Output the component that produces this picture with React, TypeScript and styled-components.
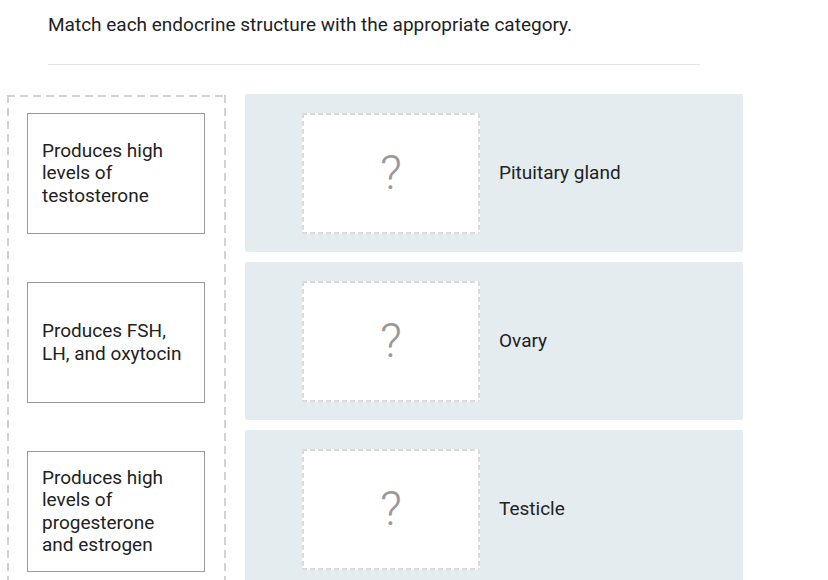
import React from "react";
import styled, { createGlobalStyle, css } from "styled-components";

const GlobalStyle = createGlobalStyle`
  html, body {
    margin: 0;
    padding: 0;
    background: #ffffff;
    font-family: Roboto, "Liberation Sans", Arial, sans-serif;
    color: #222222;
  }
`;

interface Pair {
  item: string;
  category: string;
}

const pairs: Pair[] = [
  { item: "Produces high levels of testosterone", category: "Pituitary gland" },
  { item: "Produces FSH, LH, and oxytocin", category: "Ovary" },
  { item: "Produces high levels of progesterone and estrogen", category: "Testicle" },
];

// dashed outline drawn with gradients, so dash and gap lengths can be set
const dashed = (color: string, dash: number, gap: number, width: number) => css`
  background-image:
    repeating-linear-gradient(90deg, ${color} 0 ${dash}px, transparent ${dash}px ${dash + gap}px),
    repeating-linear-gradient(90deg, ${color} 0 ${dash}px, transparent ${dash}px ${dash + gap}px),
    repeating-linear-gradient(180deg, ${color} 0 ${dash}px, transparent ${dash}px ${dash + gap}px),
    repeating-linear-gradient(180deg, ${color} 0 ${dash}px, transparent ${dash}px ${dash + gap}px);
  background-size: 100% ${width}px, 100% ${width}px, ${width}px 100%, ${width}px 100%;
  background-position: 0 0, 0 100%, 0 0, 100% 0;
  background-repeat: no-repeat;
`;

const App: React.FC = () => {
  return (
    <Page>
      <GlobalStyle />
      <Header>
        <Prompt>Match each endocrine structure with the appropriate category.</Prompt>
        <Divider />
      </Header>
      <Board>
        <Pool>
          {pairs.map((p) => (
            <Card key={p.item}>
              <CardText>{p.item}</CardText>
            </Card>
          ))}
        </Pool>
        <Targets>
          {pairs.map((p) => (
            <TargetRow key={p.category}>
              <DropZone>
                <Placeholder>?</Placeholder>
              </DropZone>
              <Category>{p.category}</Category>
            </TargetRow>
          ))}
        </Targets>
      </Board>
    </Page>
  );
};

export default App;

const Page = styled.div`
  width: 828px;
  height: 580px;
  overflow: hidden;
  box-sizing: border-box;
`;

const Header = styled.div`
  padding: 12px 0 0 48px;
  width: 652px;
`;

const Prompt = styled.h1`
  margin: 0;
  font-size: 19px;
  font-weight: 400;
  line-height: 25px;
  color: #222222;
`;

const Divider = styled.div`
  margin-top: 27px;
  height: 1px;
  background: #e3e3e3;
`;

const Board = styled.div`
  display: flex;
  align-items: flex-start;
  gap: 19px;
  margin-top: 29px;
  padding-left: 7px;
`;

const Pool = styled.div`
  box-sizing: border-box;
  width: 219px;
  margin-top: 1px;
  padding: 18px 20px 40px;
  display: flex;
  flex-direction: column;
  gap: 48px;
  ${dashed("#d3d3d3", 8, 5, 2)}
`;

const Card = styled.div`
  box-sizing: border-box;
  width: 178px;
  height: 121px;
  padding: 0 14px;
  border: 1px solid #9a9a9a;
  background: #ffffff;
  display: flex;
  align-items: center;
`;

const CardText = styled.div`
  font-size: 19px;
  line-height: 22.5px;
  color: #222222;
`;

const Targets = styled.div`
  display: flex;
  flex-direction: column;
  gap: 10px;
`;

const TargetRow = styled.div`
  box-sizing: border-box;
  width: 498px;
  height: 158px;
  padding-left: 57px;
  background: #e4ecef;
  border-radius: 2px;
  display: flex;
  align-items: center;
  gap: 19px;
`;

const DropZone = styled.div`
  box-sizing: border-box;
  width: 178px;
  height: 121px;
  background-color: #ffffff;
  border-radius: 2px;
  display: flex;
  align-items: center;
  justify-content: center;
  ${dashed("#dadada", 5, 3, 2)}
`;

const Placeholder = styled.span`
  font-size: 48px;
  font-weight: 300;
  line-height: 1;
  color: #999999;
`;

const Category = styled.div`
  font-size: 19px;
  line-height: 24px;
  color: #222222;
`;
